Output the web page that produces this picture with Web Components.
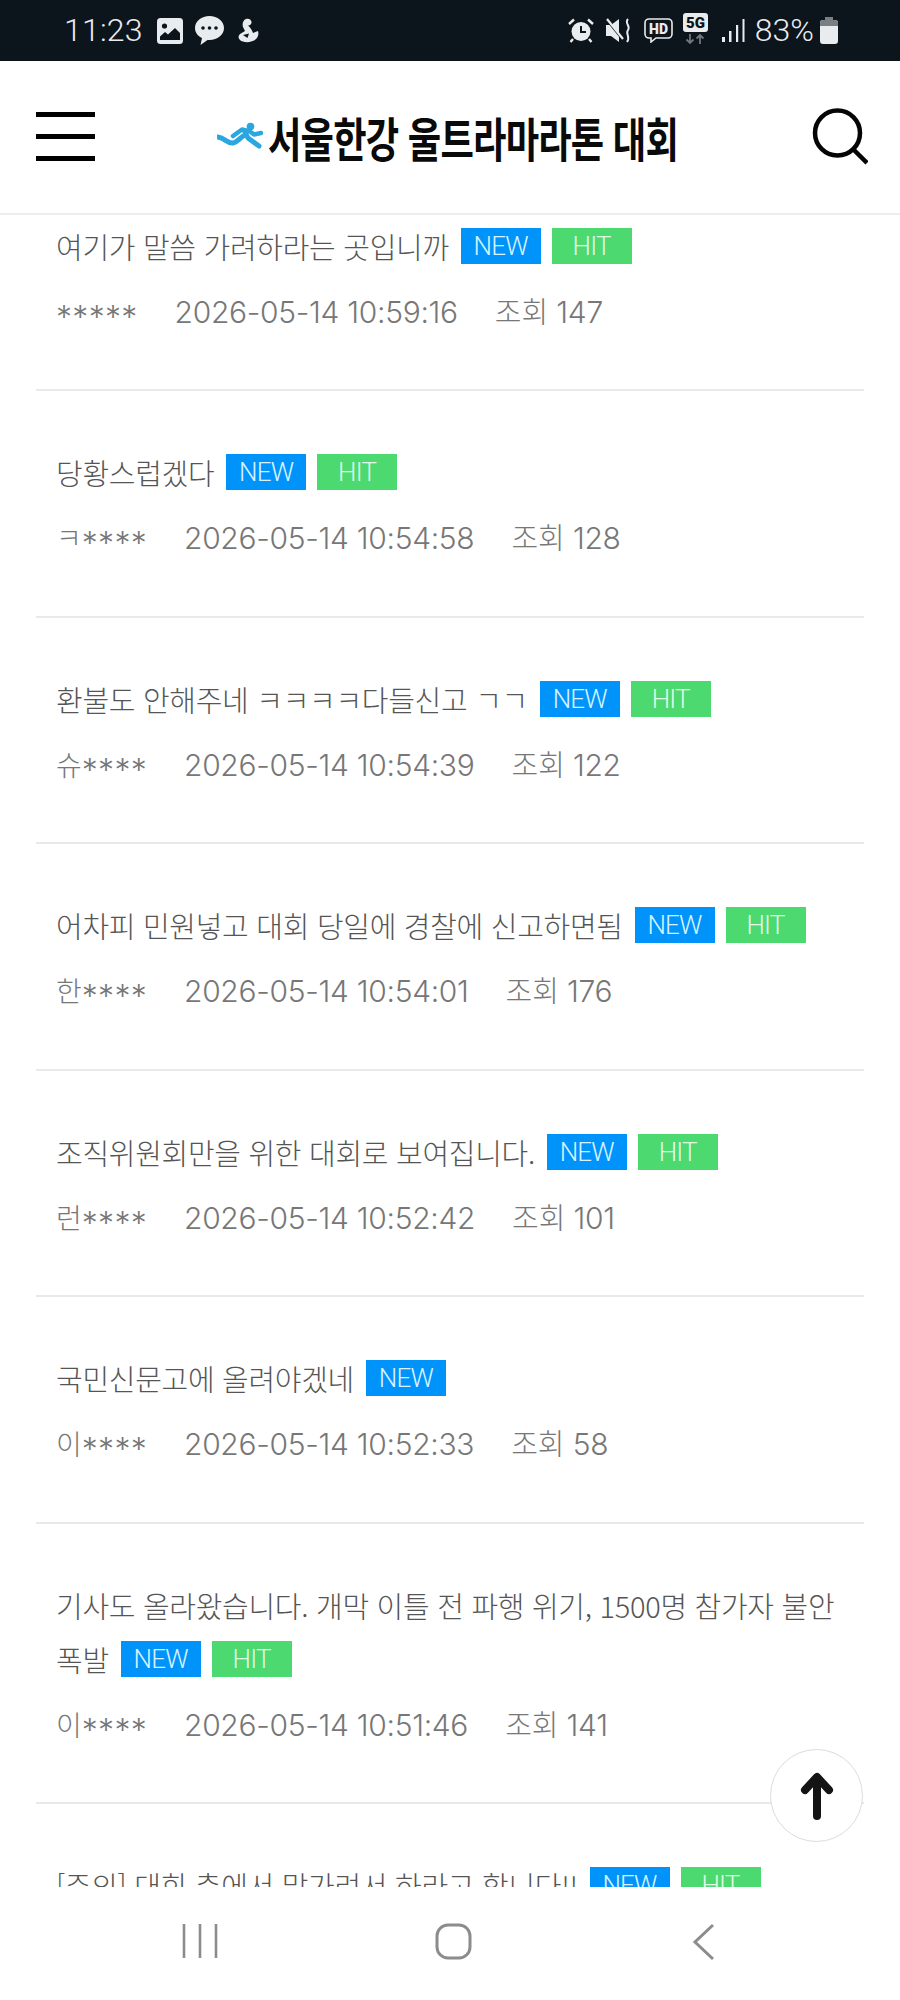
<!DOCTYPE html>
<html lang="ko">
<head>
<meta charset="utf-8">
<title>서울한강 울트라마라톤 대회</title>
<style>
  html, body { margin: 0; padding: 0; background: #fff; }
  body { width: 900px; height: 2000px; overflow: hidden; position: relative; display: flex; flex-direction: column; font-family: "Noto Sans CJK KR", "Noto Sans", sans-serif; }
</style>
</head>
<body>
<status-bar></status-bar>
<site-header></site-header>
<post-list>
  <post-row subject="여기가 말씀 가려하라는 곳입니까" author="*****" date="2026-05-14 10:59:16" views="147" hit></post-row>
  <post-row subject="당황스럽겠다" author="ㅋ****" date="2026-05-14 10:54:58" views="128" hit></post-row>
  <post-row subject="환불도 안해주네 ㅋㅋㅋㅋ다들신고 ㄱㄱ" author="슈****" date="2026-05-14 10:54:39" views="122" hit></post-row>
  <post-row subject="어차피 민원넣고 대회 당일에 경찰에 신고하면됨" author="한****" date="2026-05-14 10:54:01" views="176" hit></post-row>
  <post-row subject="조직위원회만을 위한 대회로 보여집니다." author="런****" date="2026-05-14 10:52:42" views="101" hit></post-row>
  <post-row subject="국민신문고에 올려야겠네" author="이****" date="2026-05-14 10:52:33" views="58"></post-row>
  <post-row subject="기사도 올라왔습니다. 개막 이틀 전 파행 위기, 1500명 참가자 불안 폭발" author="이****" date="2026-05-14 10:51:46" views="141" hit></post-row>
  <post-row subject="[주의] 대회 측에서 말가려서 하라고 합니다!!" author="이****" date="2026-05-14 10:50:12" views="96" hit></post-row>
</post-list>
<nav-bar></nav-bar>
<top-button></top-button>

<script>
class StatusBar extends HTMLElement {
  constructor() {
    super();
    this.attachShadow({ mode: 'open' }).innerHTML = `
<style>
  :host { display: flex; flex: none; height: 61px; background: #0c141c; color: #e9ecee; align-items: center; justify-content: space-between; padding: 0 62px 0 64px; box-sizing: border-box; font-family: Roboto, sans-serif; }
  .side { display: flex; align-items: center; }
  .txt { font-size: 32px; font-weight: 300; line-height: 61px; letter-spacing: .2px; }
  svg { display: block; flex: none; }
</style>
<div class="side">
  <span class="txt">11:23</span>
  <svg style="margin-left:14px" width="26" height="26" viewBox="0 0 26 26"><rect width="26" height="26" rx="3.5" fill="#e9ecee"/><circle cx="7.5" cy="8" r="2.6" fill="#0c141c"/><path d="M3 22V18.5L8 14L11 16.5L18 10L23 15V22Z" fill="#0c141c"/></svg>
  <svg style="margin-left:11px" width="31" height="31" viewBox="0 0 31 31"><path d="M15.5 1C7.5 1 1 6.2 1 13C1 17.5 3.8 21 8 23L6.5 30L13.5 25C14.2 25 14.8 25 15.5 25C23.5 25 30 19.8 30 13C30 6.2 23.5 1 15.5 1Z" fill="#e9ecee"/><circle cx="9" cy="13" r="1.8" fill="#0c141c"/><circle cx="15.5" cy="13" r="1.8" fill="#0c141c"/><circle cx="22" cy="13" r="1.8" fill="#0c141c"/></svg>
  <svg style="margin-left:12px" width="23" height="25" viewBox="0 0 23 25"><path d="M9 1C12 0 15 2 14.500 5C14 7 12 7.500 11 7.500C13 9 15 12 16 15L21 13C22 16 21 19 19 21C15 25 6 25 3 22C1 20 1 18 3 16L8 13L6 9C5 6 6 2 9 1Z" fill="#e9ecee"/><path d="M6 17L12 15.500L10.500 20Z" fill="#0c141c"/></svg>
</div>
<div class="side">
  <svg width="26" height="25" viewBox="0 0 26 25"><circle cx="13" cy="13.5" r="9.5" fill="#e9ecee"/><path d="M13 8V14H18" fill="none" stroke="#0c141c" stroke-width="2"/><path d="M1 6L6 1.5M25 6L20 1.5M5 21L2.5 24M21 21L23.500 24" stroke="#e9ecee" stroke-width="2.4"/></svg>
  <svg style="margin-left:11px" width="27" height="25" viewBox="0 0 27 25"><path d="M1 7H6L14 1V24L6 18H1Z" fill="#e9ecee"/><path d="M1 1L18 22" stroke="#0c141c" stroke-width="2"/><path d="M2 1L18 21" stroke="#e9ecee" stroke-width="2.2"/><path d="M23 1C19 5 26 8 23 12C20 16 26 19 22 24" fill="none" stroke="#e9ecee" stroke-width="2"/></svg>
  <svg style="margin-left:12px" width="29" height="25" viewBox="0 0 29 25"><path d="M5 1H24A4 4 0 0 1 28 5V16A4 4 0 0 1 24 20H12L7 24V20H5A4 4 0 0 1 1 16V5A4 4 0 0 1 5 1Z" fill="none" stroke="#e9ecee" stroke-width="1.6"/><text x="14.500" y="15.500" text-anchor="middle" font-family="Roboto" font-weight="900" font-size="14" fill="#e9ecee">HD</text></svg>
  <svg style="margin-left:9px;margin-top:-3px" width="27" height="32" viewBox="0 0 27 32"><rect x="1" y="0" width="25" height="19" rx="3" fill="#e9ecee"/><text x="13.500" y="15" text-anchor="middle" font-family="Roboto" font-weight="900" font-size="15" fill="#0c141c">5G</text><path d="M8 21V30M4.500 26.500L8 30L11.500 26.500M18 31V22M14.500 25.500L18 22L21.500 25.500" fill="none" stroke="#71777b" stroke-width="1.8"/></svg>
  <svg style="margin-left:12px" width="24" height="25" viewBox="0 0 24 25"><rect x="1" y="19" width="3" height="5" fill="#e9ecee"/><rect x="8" y="13" width="2.500" height="11" fill="#e9ecee"/><rect x="15" y="7" width="2.200" height="17" fill="#e9ecee"/><rect x="21.500" y="1" width="2" height="23" fill="#e9ecee"/></svg>
  <span class="txt" style="margin-left:10px;letter-spacing:0">83%</span>
  <svg style="margin-left:6px" width="18" height="27" viewBox="0 0 18 27"><path d="M5.500 0H12.500V3H15A3 3 0 0 1 18 6V24A3 3 0 0 1 15 27H3A3 3 0 0 1 0 24V6A3 3 0 0 1 3 3H5.500Z" fill="#e9ecee"/><path d="M5.500 0H12.500V3H15A3 3 0 0 1 18 6V9H0V6A3 3 0 0 1 3 3H5.500Z" fill="#7a7f83"/></svg>
</div>`;
  }
}

class SiteHeader extends HTMLElement {
  constructor() {
    super();
    this.attachShadow({ mode: 'open' }).innerHTML = `
<style>
  :host { display: grid; grid-template-columns: 59px 1fr 56px; flex: none; height: 154px; box-sizing: border-box; padding: 0 32px 0 36px; background: #fff; border-bottom: 2px solid #ececec; align-items: center; position: relative; z-index: 2; }
  .burger { display: flex; flex-direction: column; gap: 17px; margin-top: -1px; }
  .burger i { display: block; height: 5px; background: #000; }
  .logo { display: flex; align-items: center; margin-left: 122px; height: 60px; }
  .logo svg { display: block; flex: none; }
  .name { display: block; white-space: nowrap; margin-left: 5px; font: 700 47px/60px "Noto Sans CJK KR", sans-serif; color: #0a0a0a; transform: scaleX(.772); transform-origin: left center; letter-spacing: -1px; }
  .find { justify-self: end; display: block; }
</style>
<div class="burger"><i></i><i></i><i></i></div>
<div class="logo">
  <svg width="46" height="30" viewBox="0 0 46 30">
    <circle cx="33.500" cy="4.500" r="3.800" fill="#2aa7e0"/>
    <path d="M1 15C8 16 11 22 16 21C21 20 22 16 28 13" fill="none" stroke="#2aa7e0" stroke-width="5" stroke-linecap="round"/>
    <path d="M16 14L25 7.500L33 9.500L37 12.500L44 11" fill="none" stroke="#2aa7e0" stroke-width="4.500" stroke-linejoin="round" stroke-linecap="round"/>
    <path d="M28 10L31 16L42 24" fill="none" stroke="#2aa7e0" stroke-width="5" stroke-linejoin="round" stroke-linecap="round"/>
  </svg>
  <span class="name">서울한강 울트라마라톤 대회</span>
</div>
<svg class="find" width="56" height="58" viewBox="0 0 56 58"><circle cx="25.500" cy="25" r="22.500" fill="none" stroke="#050505" stroke-width="4.500"/><path d="M41 41L55 55" stroke="#050505" stroke-width="4.500"/></svg>`;
  }
}

const rowTemplate = document.createElement('template');
rowTemplate.innerHTML = `
<style>
  :host { display: block; box-sizing: border-box; padding: 54px 20px 59.9px; border-bottom: 2px solid #e9e9e9; font-family: "Noto Sans CJK KR", sans-serif; }
  .subject { font-size: 29px; font-weight: 300; line-height: 54px; color: #555; letter-spacing: -.3px; word-break: keep-all; }
  .tag { display: inline-block; vertical-align: top; width: 80px; height: 36px; margin: 9px 0 0 4px; text-align: center; font: 300 26px/36px Roboto, sans-serif; letter-spacing: -.8px; color: #d8f3ff; }
  .tag + .tag { margin-left: 11px; color: #e2fbe8; }
  .new { background: #0094fb; }
  .hit { background: #4cd96f; }
  .meta { display: flex; align-items: baseline; height: 40px; margin-top: 16.6px; font-size: 28px; font-weight: 300; line-height: 40px; color: #777; }
  #author { margin-right: 37px; }
  #author i { font: 300 32px/0 Inter, sans-serif; letter-spacing: .3px; vertical-align: -6px; }
  .date { font-family: Inter, "Noto Sans CJK KR", sans-serif; font-size: 30px; letter-spacing: -.3px; margin-right: 37px; }
  .views { font-size: 29px; }
  .views b { font-weight: 300; font-family: Inter, sans-serif; font-size: 30px; letter-spacing: -.3px; }
</style>
<div class="subject"><span id="subject"></span> <span class="tag new">NEW</span><span class="tag hit" id="hit">HIT</span></div>
<div class="meta"><span id="author"></span><span class="date" id="date"></span><span class="views">조회 <b id="views"></b></span></div>`;

class PostRow extends HTMLElement {
  constructor() {
    super();
    this.attachShadow({ mode: 'open' }).appendChild(rowTemplate.content.cloneNode(true));
  }
  connectedCallback() {
    const root = this.shadowRoot;
    const author = this.getAttribute('author');
    const split = author.indexOf('*');
    const stars = document.createElement('i');
    stars.textContent = author.slice(split);
    const box = root.getElementById('author');
    box.append(author.slice(0, split), stars);
    root.getElementById('subject').textContent = this.getAttribute('subject');
    root.getElementById('date').textContent = this.getAttribute('date');
    root.getElementById('views').textContent = this.getAttribute('views');
    if (!this.hasAttribute('hit')) root.getElementById('hit').remove();
  }
}

class PostList extends HTMLElement {
  constructor() {
    super();
    this.attachShadow({ mode: 'open' }).innerHTML = `
<style>
  :host { display: block; flex: 1; min-height: 0; overflow: hidden; margin: 0; background: #fff; }
  .rows { margin: -50px 36px 0; }
</style>
<div class="rows"><slot></slot></div>`;
  }
}

class NavBar extends HTMLElement {
  constructor() {
    super();
    this.attachShadow({ mode: 'open' }).innerHTML = `
<style>
  :host { display: flex; flex: none; height: 113px; background: #fff; justify-content: space-between; align-items: flex-start; box-sizing: border-box; padding: 0 184px 0 182px; }
  svg { display: block; margin-top: 36px; }
</style>
<svg width="36" height="36" viewBox="0 0 36 36"><path d="M2 1V35M18 1V35M34 1V35" stroke="#8c8c8c" stroke-width="2.600" fill="none"/></svg>
<svg width="38" height="38" viewBox="0 0 38 38" style="margin-left:-3px"><rect x="2" y="2" width="33" height="33" rx="11" fill="none" stroke="#8c8c8c" stroke-width="3"/></svg>
<svg width="24" height="38" viewBox="0 0 24 38"><path d="M21 2L3 19L21 36" stroke="#8c8c8c" stroke-width="3" fill="none"/></svg>`;
  }
}

class TopButton extends HTMLElement {
  constructor() {
    super();
    this.attachShadow({ mode: 'open' }).innerHTML = `
<style>
  :host { position: absolute; left: 770px; top: 1749px; width: 93px; height: 93px; box-sizing: border-box; border: 1.500px solid #dcdcdc; border-radius: 50%; background: #fff; display: flex; align-items: center; justify-content: center; }
  svg { display: block; }
</style>
<svg width="34" height="48" viewBox="0 0 34 48"><path d="M17 44V6M5 18L17 5L29 18" fill="none" stroke="#141414" stroke-width="8" stroke-linecap="round" stroke-linejoin="round"/></svg>`;
  }
}

customElements.define('status-bar', StatusBar);
customElements.define('site-header', SiteHeader);
customElements.define('post-row', PostRow);
customElements.define('post-list', PostList);
customElements.define('nav-bar', NavBar);
customElements.define('top-button', TopButton);
</script>
</body>
</html>
